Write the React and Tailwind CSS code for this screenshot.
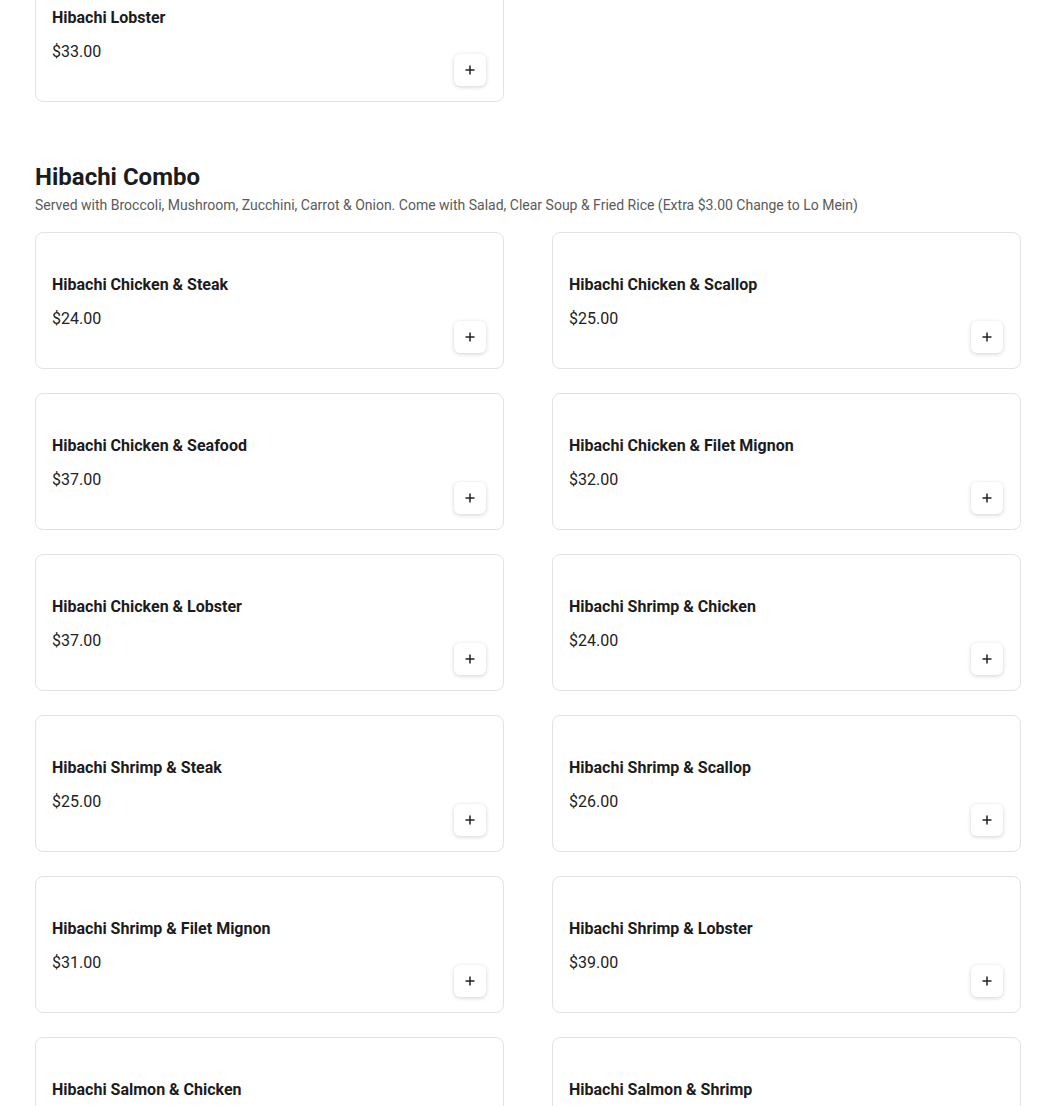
import React from "react";

const items = [
  ["Hibachi Chicken & Steak", "$24.00"],
  ["Hibachi Chicken & Scallop", "$25.00"],
  ["Hibachi Chicken & Seafood", "$37.00"],
  ["Hibachi Chicken & Filet Mignon", "$32.00"],
  ["Hibachi Chicken & Lobster", "$37.00"],
  ["Hibachi Shrimp & Chicken", "$24.00"],
  ["Hibachi Shrimp & Steak", "$25.00"],
  ["Hibachi Shrimp & Scallop", "$26.00"],
  ["Hibachi Shrimp & Filet Mignon", "$31.00"],
  ["Hibachi Shrimp & Lobster", "$39.00"],
  ["Hibachi Salmon & Chicken", "$26.00"],
  ["Hibachi Salmon & Shrimp", "$27.00"],
];

function Plus() {
  return (
    <svg width="12" height="12" viewBox="0 0 12 12" fill="none">
      <path d="M6 1.5v9M1.5 6h9" stroke="#222" strokeWidth="1.5" />
    </svg>
  );
}

function Card({ name, price }) {
  return (
    <div className="h-[137px] bg-white border border-[#e3e3e3] rounded-lg flex justify-between pl-4 pr-[17px]">
      <div className="pt-[40px]">
        <div className="text-[16px] leading-6 font-bold text-[#1c1c1c]">{name}</div>
        <div className="mt-[10px] text-[16px] leading-6 text-[#222]">{price}</div>
      </div>
      <button className="self-end mb-[15px] w-8 h-8 flex items-center justify-center bg-white rounded-md shadow-[0_1px_4px_rgba(0,0,0,0.18)]">
        <Plus />
      </button>
    </div>
  );
}

export default function App() {
  return (
    <div className="bg-white min-h-screen overflow-hidden" style={{ fontFamily: "Roboto, 'Liberation Sans', sans-serif" }}>
      <div className="ml-[35px] w-[986px]">
        <div className="grid grid-cols-2 gap-x-12 mt-[-35px]">
          <Card name="Hibachi Lobster" price="$33.00" />
        </div>
        <h2 className="mt-[59px] text-[24px] leading-8 font-bold text-[#1c1c1c]">Hibachi Combo</h2>
        <p className="mt-[2px] text-[14px] leading-5 text-[#5a5a5a]">
          Served with Broccoli, Mushroom, Zucchini, Carrot &amp; Onion. Come with Salad, Clear Soup &amp; Fried Rice (Extra $3.00 Change to Lo Mein)
        </p>
        <div className="grid grid-cols-2 gap-x-12 gap-y-6 mt-[17px] pb-10">
          {items.map(([n, p]) => (
            <Card key={n} name={n} price={p} />
          ))}
        </div>
      </div>
    </div>
  );
}
